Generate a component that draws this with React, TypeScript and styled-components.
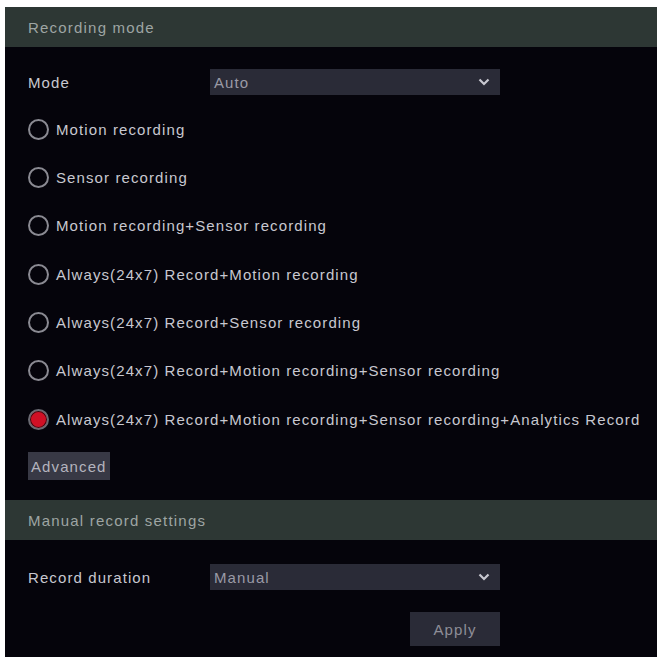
import styled, { createGlobalStyle } from "styled-components";

const GlobalStyle = createGlobalStyle`
  html, body {
    margin: 0;
    padding: 0;
    background: #ffffff;
  }
  body {
    font-family: "Liberation Sans", Arial, sans-serif;
  }
`;

const modes = [
  "Motion recording",
  "Sensor recording",
  "Motion recording+Sensor recording",
  "Always(24x7) Record+Motion recording",
  "Always(24x7) Record+Sensor recording",
  "Always(24x7) Record+Motion recording+Sensor recording",
  "Always(24x7) Record+Motion recording+Sensor recording+Analytics Record",
];

const Chevron = () => (
  <svg width="12" height="8" viewBox="0 0 12 8">
    <path d="M1.5 1.5 L6 6 L10.5 1.5" stroke="#c8c8d0" strokeWidth="2.2" fill="none" />
  </svg>
);

const App = () => {
  const selected = 6;
  return (
    <>
      <GlobalStyle />
      <Page>
        <Panel>
          <SectionHeader>Recording mode</SectionHeader>
          <Body>
            <FieldRow>
              <Label>Mode</Label>
              <Select>
                <span>Auto</span>
                <Chevron />
              </Select>
            </FieldRow>
            <RadioList>
              {modes.map((m, i) => (
                <RadioRow key={m}>
                  <Radio $checked={i === selected} />
                  <RadioText>{m}</RadioText>
                </RadioRow>
              ))}
            </RadioList>
            <SmallButton>Advanced</SmallButton>
          </Body>
          <SectionHeader>Manual record settings</SectionHeader>
          <Body $bottom>
            <FieldRow>
              <Label>Record duration</Label>
              <Select>
                <span>Manual</span>
                <Chevron />
              </Select>
            </FieldRow>
            <ApplyRow>
              <ApplyButton>Apply</ApplyButton>
            </ApplyRow>
          </Body>
        </Panel>
      </Page>
    </>
  );
};

export default App;

const Page = styled.div`
  width: 657px;
  height: 657px;
  padding: 7px 0 0 5px;
  box-sizing: border-box;
  background: #ffffff;
  overflow: hidden;
`;

const Panel = styled.div`
  height: 100%;
  background: #05040b;
  display: flex;
  flex-direction: column;
  color: #c4c4cc;
  font-size: 15px;
  letter-spacing: 1.1px;
`;

const SectionHeader = styled.div`
  height: 40px;
  flex-shrink: 0;
  background: #2d3734;
  display: flex;
  align-items: center;
  padding-left: 23px;
  color: #9ea5a3;
  font-size: 15px;
  letter-spacing: 1.2px;
`;

const Body = styled.div<{ $bottom?: boolean }>`
  display: flex;
  flex-direction: column;
  padding: ${(p) => (p.$bottom ? "24px 0 0 23px" : "22px 0 20px 23px")};
`;

const FieldRow = styled.div`
  display: flex;
  align-items: center;
  height: 26px;
`;

const Label = styled.div`
  width: 182px;
  color: #c8c8d0;
`;

const Select = styled.div`
  width: 290px;
  height: 26px;
  box-sizing: border-box;
  background: #2a2b37;
  display: flex;
  align-items: center;
  justify-content: space-between;
  padding: 0 10px 0 4px;
  color: #9a9aa6;
`;

const RadioList = styled.div`
  display: flex;
  flex-direction: column;
  margin-top: 24px;
  gap: 28.4px;
`;

const RadioRow = styled.div`
  display: flex;
  align-items: center;
  height: 20px;
  gap: 7px;
`;

const Radio = styled.span<{ $checked?: boolean }>`
  width: 17px;
  height: 17px;
  border-radius: 50%;
  border: 2px solid ${(p) => (p.$checked ? "#6a6a72" : "#8a8a92")};
  background: ${(p) => (p.$checked ? "#d01025" : "transparent")};
  box-shadow: ${(p) => (p.$checked ? "inset 0 0 0 1px #3a0a10" : "none")};
  flex-shrink: 0;
`;

const RadioText = styled.span`
  color: #c8c8d0;
  white-space: nowrap;
`;

const SmallButton = styled.div`
  align-self: flex-start;
  margin-top: 23px;
  height: 28px;
  padding: 0 3px;
  display: flex;
  align-items: center;
  background: #383945;
  color: #b4b4be;
  letter-spacing: 1.1px;
`;

const ApplyRow = styled.div`
  display: flex;
  padding-left: 382px;
  margin-top: 22px;
`;

const ApplyButton = styled.div`
  width: 90px;
  height: 34px;
  display: flex;
  align-items: center;
  justify-content: center;
  background: #2a2b37;
  color: #8e8e98;
`;
